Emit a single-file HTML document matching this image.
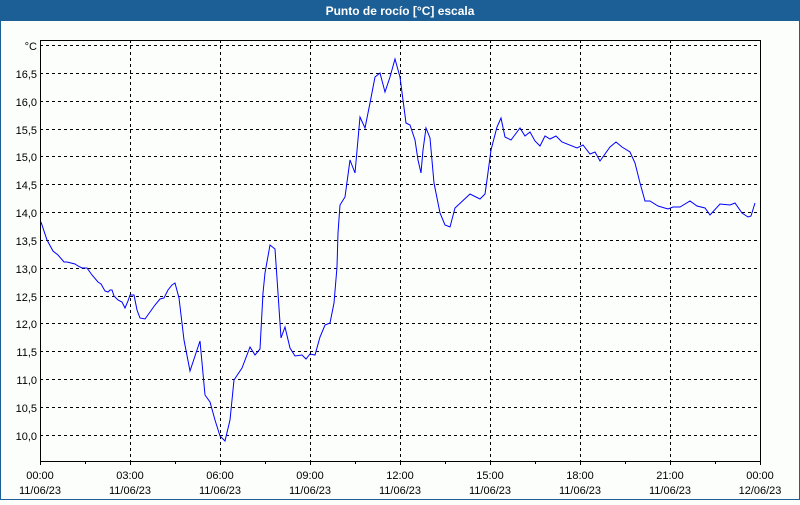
<!DOCTYPE html>
<html><head><meta charset="utf-8"><style>
html,body{margin:0;padding:0;}
body{width:800px;height:500px;overflow:hidden;background:#fcfefc;font-family:"Liberation Sans",sans-serif;}
</style></head><body>
<svg width="800" height="500" xmlns="http://www.w3.org/2000/svg" font-family="Liberation Sans, sans-serif" font-size="11">
<rect x="0" y="0" width="800" height="500" fill="#fcfefc"/>
<rect x="0" y="0" width="800" height="21" fill="#1c5f96"/>
<rect x="0.5" y="0.5" width="799" height="499" fill="none" stroke="#1c5f96"/>
<text x="400" y="15" text-anchor="middle" fill="#fff" font-weight="bold" font-size="12">Punto de rocío [°C] escala</text>
<g stroke="#000" stroke-width="1" stroke-dasharray="3,3" shape-rendering="crispEdges">
<line x1="40" x2="760" y1="45.5" y2="45.5"/>
<line x1="40" x2="760" y1="73.5" y2="73.5"/>
<line x1="40" x2="760" y1="101.5" y2="101.5"/>
<line x1="40" x2="760" y1="129.5" y2="129.5"/>
<line x1="40" x2="760" y1="156.5" y2="156.5"/>
<line x1="40" x2="760" y1="184.5" y2="184.5"/>
<line x1="40" x2="760" y1="212.5" y2="212.5"/>
<line x1="40" x2="760" y1="240.5" y2="240.5"/>
<line x1="40" x2="760" y1="268.5" y2="268.5"/>
<line x1="40" x2="760" y1="296.5" y2="296.5"/>
<line x1="40" x2="760" y1="323.5" y2="323.5"/>
<line x1="40" x2="760" y1="351.5" y2="351.5"/>
<line x1="40" x2="760" y1="379.5" y2="379.5"/>
<line x1="40" x2="760" y1="407.5" y2="407.5"/>
<line x1="40" x2="760" y1="435.5" y2="435.5"/>
<line x1="130.5" x2="130.5" y1="40" y2="461"/>
<line x1="220.5" x2="220.5" y1="40" y2="461"/>
<line x1="310.5" x2="310.5" y1="40" y2="461"/>
<line x1="400.5" x2="400.5" y1="40" y2="461"/>
<line x1="490.5" x2="490.5" y1="40" y2="461"/>
<line x1="580.5" x2="580.5" y1="40" y2="461"/>
<line x1="670.5" x2="670.5" y1="40" y2="461"/>
</g>
<g stroke="#000" stroke-width="1" fill="none" shape-rendering="crispEdges">
<rect x="40.5" y="40.5" width="720" height="421"/>
<path d="M40.5 461v4M85.5 461v3M130.5 461v4M175.5 461v3M220.5 461v4M265.5 461v3M310.5 461v4M355.5 461v3M400.5 461v4M445.5 461v3M490.5 461v4M535.5 461v3M580.5 461v4M625.5 461v3M670.5 461v4M715.5 461v3M760.5 461v4"/>
</g>
<polyline fill="none" stroke="#0000ff" stroke-width="1" points="41,222 47,240 53,251 58,255 64,262 67,262 75,264 78,266 82,268 87,268 92,275 98,282 101,284 105,291 108,292 110,290 112,290 114,296 118,300 122,302 125,308 128,301 130,295 134,295 137,310 140,318 145,319 150,312 155,305 160,299 164,298 168,290 172,285 175,283 179,298 184,340 190,371 196,353 200,341 205,395 210,402 215,420 220,436 225,441 230,420 234,380 242,368 250,347 255,355 260,349 263,293 265,273 270,245 275,249 278,293 281,338 285,327 290,348 295,356 302,355 306,359 310,354 315,355 320,337 325,325 330,323 334,303 337,267 338,233 340,205 345,197 350,160 355,173 360,117 365,128 370,103 375,77 380,73 385,92 390,77 395,59 400,77 403,100 406,123 410,125 415,140 418,160 421,173 423,150 426,128 430,138 434,183 440,213 445,225 450,227 455,208 470,194 480,199 485,194 487,180 491,150 497,127 501,118 505,137 511,140 520,128 525,136 530,132 535,141 540,146 545,136 550,139 556,136 562,142 577,148 583,145 590,154 595,152 600,161 610,147 616,142 622,147 630,152 635,163 640,183 645,201 650,201 658,206 668,209 673,207 680,207 690,201 697,206 705,208 710,215 720,204 730,205 735,203 742,213 748,217 751,216 755,203"/>
<g fill="#000" text-anchor="end">
<text x="37" y="50">°C</text>
<text x="37" y="78">16,5</text>
<text x="37" y="106">16,0</text>
<text x="37" y="134">15,5</text>
<text x="37" y="161">15,0</text>
<text x="37" y="189">14,5</text>
<text x="37" y="217">14,0</text>
<text x="37" y="245">13,5</text>
<text x="37" y="273">13,0</text>
<text x="37" y="301">12,5</text>
<text x="37" y="328">12,0</text>
<text x="37" y="356">11,5</text>
<text x="37" y="384">11,0</text>
<text x="37" y="412">10,5</text>
<text x="37" y="440">10,0</text>
</g>
<g fill="#000" text-anchor="middle">
<text x="40" y="479">00:00</text><text x="40" y="494">11/06/23</text>
<text x="130" y="479">03:00</text><text x="130" y="494">11/06/23</text>
<text x="220" y="479">06:00</text><text x="220" y="494">11/06/23</text>
<text x="310" y="479">09:00</text><text x="310" y="494">11/06/23</text>
<text x="400" y="479">12:00</text><text x="400" y="494">11/06/23</text>
<text x="490" y="479">15:00</text><text x="490" y="494">11/06/23</text>
<text x="580" y="479">18:00</text><text x="580" y="494">11/06/23</text>
<text x="670" y="479">21:00</text><text x="670" y="494">11/06/23</text>
<text x="760" y="479">00:00</text><text x="760" y="494">12/06/23</text>
</g>
</svg>
</body></html>
